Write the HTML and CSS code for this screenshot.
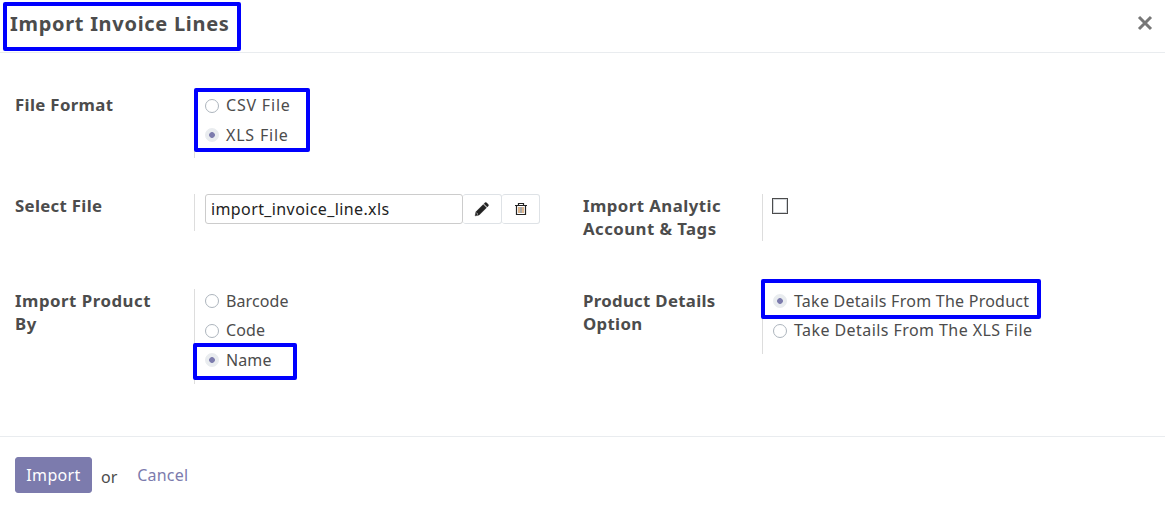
FILE: index.html
```html
<!DOCTYPE html>
<html lang="en">
<head>
<meta charset="utf-8">
<title>Import Invoice Lines</title>
<link rel="stylesheet" href="styles.css">
</head>
<body>
<main class="dialog">
<header class="header"><h1 class="title">Import Invoice Lines</h1><button class="close" aria-label="Close"><svg width="16" height="16" viewBox="0 0 16 16"><path d="M2 2l12 12M14 2L2 14" stroke="#777" stroke-width="3"/></svg></button></header>
<section class="body">
<div class="row row-format">
<div class="field"><div class="label label-format">File Format</div><div class="value options marked-format"><label class="option wide"><i class="radio"></i>CSV File</label><label class="option wide"><i class="radio on"></i>XLS File</label></div></div>
</div>
<div class="row row-file">
<div class="field"><div class="label label-file">Select File</div><div class="value file"><input class="input" value="import_invoice_line.xls"><button class="tool" aria-label="Edit"><svg width="16" height="16" viewBox="0 0 14 14"><path d="M1 13l.7-3.500 6.400-6.400 2.800 2.800-6.400 6.400zM8.800 2.400l.8-.8q.7-.6 1.400 0l1.400 1.400q.6.700 0 1.400l-.8.800z" fill="#222" stroke="#222" stroke-width=".4"/><path d="M2.200 10.500l1.300 1.300" stroke="#fff" stroke-width=".7"/></svg></button><button class="tool" aria-label="Delete"><svg width="14" height="14" viewBox="0 0 14 14"><path d="M1 3.500h12M4.500 3V1.500h5V3M2.500 4v8.500h9V4" fill="none" stroke="#222" stroke-width="1.200"/><path d="M5 5v6" stroke="#b86a1c"/><path d="M7 5v6" stroke="#555"/><path d="M9 5v6" stroke="#b86a1c"/></svg></button></div></div>
<div class="field"><div class="label">Import Analytic<br>Account &amp; Tags</div><div class="value check"><i class="checkbox"></i></div></div>
</div>
<div class="row row-product">
<div class="field"><div class="label label-product">Import Product<br>By</div><div class="value options marked-name"><label class="option"><i class="radio"></i>Barcode</label><label class="option"><i class="radio"></i>Code</label><label class="option"><i class="radio on"></i>Name</label></div></div>
<div class="field"><div class="label label-details">Product Details<br>Option</div><div class="value options marked-details"><label class="option take-product"><i class="radio on"></i>Take Details From The Product</label><label class="option take-file"><i class="radio"></i>Take Details From The XLS File</label></div></div>
</div>
</section>
<footer class="footer"><button class="import">Import</button><span class="or">or</span><a class="cancel">Cancel</a></footer>
</main>
</body>
</html>
```
FILE: styles.css
```css
*, *::before { box-sizing: border-box; }
body { margin: 0; background: #fff; color: #4c4c4c; font: 16px/23px "Noto Sans", sans-serif; }
button { font: inherit; padding: 0; }
.dialog { height: 514px; display: flex; flex-direction: column; overflow: hidden; }
.header { position: relative; height: 53px; border-bottom: 1px solid #e9ecef; display: flex; justify-content: space-between; padding: 9px 12px 0 10px; }
.title { margin: 0; font-size: 20px; line-height: 30px; font-weight: 700; letter-spacing: .7px; white-space: nowrap; }
.header::before, .marked-format::before, .marked-name::before, .marked-details::before { content: ""; position: absolute; border: 4px solid #0000fe; border-radius: 2px; }
.header::before { left: 3px; top: 2px; width: 238px; height: 49px; }
.close { height: 28px; border: 0; background: none; display: flex; align-items: center; }
.body { height: 384px; border-bottom: 1px solid #e9ecef; padding: 41px 15px 0; }
.row { display: grid; grid-template-columns: 568px 1fr; }
.row-format { height: 100px; }
.row-file { height: 95px; }
.field { display: grid; grid-template-columns: 179px 1fr; align-items: start; }
.label { font-size: 16.8px; font-weight: 700; letter-spacing: .45px; white-space: nowrap; }
.label-format { letter-spacing: .35px; margin-top: -1px; }
.label-file { letter-spacing: .32px; }
.label-product { letter-spacing: .52px; }
.label-details { letter-spacing: .3px; }
.value { position: relative; border-left: 1px solid #ddd; padding-left: 10px; }
.options { padding-bottom: 6px; }
.marked-format { padding-bottom: 5px; }
.option { display: flex; align-items: center; gap: 7px; height: 29.5px; padding-bottom: 6px; white-space: nowrap; letter-spacing: .1px; }
.row-product .option { padding-bottom: 5px; }
.wide { letter-spacing: .8px; }
.take-product { letter-spacing: .25px; }
.take-file { letter-spacing: .43px; }
.radio { flex: none; width: 14px; height: 14px; border: 1px solid #adb5bd; border-radius: 50%; background: #fff; }
.radio.on { border-color: #e9ecef; background: radial-gradient(circle, #7c7bad 0 2.5px, #e9ecef 3.2px); }
.marked-format::before { left: -1px; top: -6px; width: 116px; height: 64px; }
.marked-name::before { left: -2px; top: 54px; width: 104px; height: 37px; }
.marked-details::before { left: -2px; top: -10px; width: 280px; height: 40px; }
.file { display: flex; height: 37px; }
.input { width: 258px; height: 30px; border: 1px solid #ccc; border-radius: 3px; padding: 0 5px; color: #222; font: inherit; letter-spacing: .39px; }
.tool { width: 39px; height: 30px; border: 1px solid #dee2e6; border-left-width: 0; border-radius: 3px; background: #fff; display: grid; place-items: center; }
.tool + .tool { width: 38px; }
.check { height: 47px; padding: 4px 0 0 9px; }
.checkbox { display: block; width: 16px; height: 16px; border: 1px solid #4c4c4c; box-shadow: inset 0 0 0 1px #d2d6da; }
.footer { display: flex; padding: 20px 15px; align-items: flex-start; }
.import { width: 77px; height: 36px; color: #fff; background: #7c7bad; border: 1px solid #7c7bad; border-radius: 3px; letter-spacing: .35px; }
.or { margin: 9px 20px 0 9px; }
.cancel { margin-top: 7px; color: #7c7bad; letter-spacing: .2px; }
```
